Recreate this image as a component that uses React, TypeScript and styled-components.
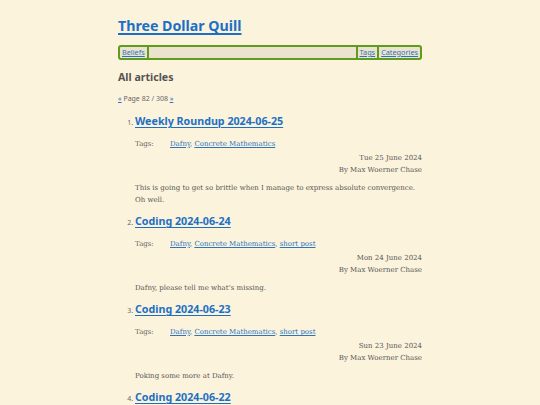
import styled, { createGlobalStyle } from 'styled-components'

const GlobalStyle = createGlobalStyle`
  html, body {
    margin: 0;
    padding: 0;
    background: #fcf3dc;
  }
  body {
    font-family: "DejaVu Serif", "Liberation Serif", serif;
    color: #555;
  }
`

const Page = styled.div`
  width: 304px;
  margin: 0 auto;
  padding-top: 14px;
`

const SiteTitle = styled.h1`
  margin: 0 0 7px;
  font-family: "Noto Sans", "Open Sans", sans-serif;
  font-size: 14.2px;
  font-weight: 700;
  line-height: 24px;
  a {
    color: #1b70c6;
    text-decoration: underline;
    text-decoration-thickness: 1.5px;
    text-underline-offset: 1.5px;
  }
`

const Nav = styled.nav`
  display: flex;
  align-items: stretch;
  height: 11px;
  border: 2px solid #5f9b1c;
  border-radius: 3px;
  background: #ebe3cd;
  font-family: "Noto Sans", "Open Sans", sans-serif;
  font-size: 7.3px;
  line-height: 11px;
`

const NavItem = styled.a<{ $side: 'left' | 'right' }>`
  padding: 0 2px;
  color: #2a74c0;
  text-decoration: underline;
  ${({ $side }) => $side === 'left' ? 'border-right: 2px solid #5f9b1c;' : 'border-left: 2px solid #5f9b1c;'}
`

const NavSpacer = styled.div`
  flex: 1;
`

const SectionTitle = styled.h2`
  margin: 9px 0 9px;
  font-family: "Noto Sans", "Open Sans", sans-serif;
  font-size: 10.6px;
  font-weight: 700;
  line-height: 16px;
  color: #555;
`

const Pager = styled.div`
  font-family: "Noto Sans", "Open Sans", sans-serif;
  font-size: 7px;
  line-height: 10px;
  color: #666;
  margin-bottom: 8px;
  a {
    color: #2a74c0;
  }
`

const Articles = styled.ol`
  margin: 0;
  padding-left: 17px;
  li::marker {
    font-family: "Noto Sans", sans-serif;
    font-size: 7px;
    color: #666;
  }
`

const Article = styled.li`
  margin-bottom: 3px;
`

const ArticleTitle = styled.h3`
  margin: 0 0 8px;
  font-family: "Noto Sans", "Open Sans", sans-serif;
  font-size: 10.7px;
  font-weight: 700;
  line-height: 18px;
  a {
    color: #1b70c6;
    text-decoration: underline;
    text-decoration-thickness: 1.3px;
    text-underline-offset: 1.5px;
  }
`

const TagRow = styled.div`
  display: grid;
  grid-template-columns: 35px 1fr;
  font-size: 7px;
  line-height: 12px;
  color: #666;
  a {
    color: #2a74c0;
  }
`

const Byline = styled.div`
  margin: 1.5px 0 6.5px;
  text-align: right;
  font-size: 7px;
  line-height: 12px;
  color: #555;
`

const Summary = styled.p`
  margin: 0 0 6px;
  font-size: 7px;
  line-height: 12px;
  color: #555;
`

type Entry = {
  title: string
  tags: string[]
  date: string
  summary: string
}

const entries: Entry[] = [
  {
    title: 'Weekly Roundup 2024-06-25',
    tags: ['Dafny', 'Concrete Mathematics'],
    date: 'Tue 25 June 2024',
    summary: 'This is going to get so brittle when I manage to express absolute convergence. Oh well.',
  },
  {
    title: 'Coding 2024-06-24',
    tags: ['Dafny', 'Concrete Mathematics', 'short post'],
    date: 'Mon 24 June 2024',
    summary: 'Dafny, please tell me what\u2019s missing.',
  },
  {
    title: 'Coding 2024-06-23',
    tags: ['Dafny', 'Concrete Mathematics', 'short post'],
    date: 'Sun 23 June 2024',
    summary: 'Poking some more at Dafny.',
  },
  {
    title: 'Coding 2024-06-22',
    tags: ['Dafny', 'Concrete Mathematics', 'short post'],
    date: 'Sat 22 June 2024',
    summary: 'More Dafny.',
  },
]

export default function App() {
  return (
    <>
      <GlobalStyle />
      <Page>
        <SiteTitle><a href="#">Three Dollar Quill</a></SiteTitle>
        <Nav>
          <NavItem href="#" $side="left">Beliefs</NavItem>
          <NavSpacer />
          <NavItem href="#" $side="right">Tags</NavItem>
          <NavItem href="#" $side="right">Categories</NavItem>
        </Nav>
        <SectionTitle>All articles</SectionTitle>
        <Pager>
          <a href="#">«</a> Page 82 / 308 <a href="#">»</a>
        </Pager>
        <Articles start={1}>
          {entries.map((e) => (
            <Article key={e.title}>
              <ArticleTitle><a href="#">{e.title}</a></ArticleTitle>
              <TagRow>
                <span>Tags:</span>
                <span>
                  {e.tags.map((t, i) => (
                    <span key={t}>
                      {i > 0 && ', '}
                      <a href="#">{t}</a>
                    </span>
                  ))}
                </span>
              </TagRow>
              <Byline>
                {e.date}
                <br />
                By Max Woerner Chase
              </Byline>
              <Summary>{e.summary}</Summary>
            </Article>
          ))}
        </Articles>
      </Page>
    </>
  )
}
